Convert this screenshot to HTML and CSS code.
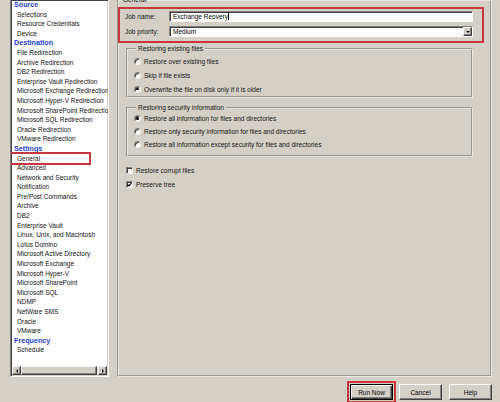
FILE: index.html
```html
<!DOCTYPE html>
<html>
<head>
<meta charset="utf-8">
<link rel="stylesheet" href="styles.css">
</head>
<body>
<div class="window">
  <div class="main">
    <div class="listbox">
      <div class="items">
        <div class="head">Source</div>
        <div class="item">Selections</div>
        <div class="item">Resource Credentials</div>
        <div class="item">Device</div>
        <div class="head">Destination</div>
        <div class="item">File Redirection</div>
        <div class="item">Archive Redirection</div>
        <div class="item">DB2 Redirection</div>
        <div class="item">Enterprise Vault Redirection</div>
        <div class="item">Microsoft Exchange Redirection</div>
        <div class="item">Microsoft Hyper-V Redirection</div>
        <div class="item">Microsoft SharePoint Redirection</div>
        <div class="item">Microsoft SQL Redirection</div>
        <div class="item">Oracle Redirection</div>
        <div class="item">VMware Redirection</div>
        <div class="head">Settings</div>
        <div class="item sel">General</div>
        <div class="item">Advanced</div>
        <div class="item">Network and Security</div>
        <div class="item">Notification</div>
        <div class="item">Pre/Post Commands</div>
        <div class="item">Archive</div>
        <div class="item">DB2</div>
        <div class="item">Enterprise Vault</div>
        <div class="item">Linux, Unix, and Macintosh</div>
        <div class="item">Lotus Domino</div>
        <div class="item">Microsoft Active Directory</div>
        <div class="item">Microsoft Exchange</div>
        <div class="item">Microsoft Hyper-V</div>
        <div class="item">Microsoft SharePoint</div>
        <div class="item">Microsoft SQL</div>
        <div class="item">NDMP</div>
        <div class="item">NetWare SMS</div>
        <div class="item">Oracle</div>
        <div class="item">VMware</div>
        <div class="head">Frequency</div>
        <div class="item">Schedule</div>
      </div>
      <div class="hscroll">
        <span class="sbtn"><span class="tri-l"></span></span>
        <span class="track"><span class="thumb"></span></span>
        <span class="sbtn"><span class="tri-r"></span></span>
      </div>
    </div>

    <fieldset class="frame">
      <legend>General</legend>
      <div class="redbox">
        <div class="field">
          <span class="flabel">Job name:</span>
          <span class="input"><span class="val">Exchange Reovery</span><span class="caret"></span></span>
        </div>
        <div class="field">
          <span class="flabel">Job priority:</span>
          <span class="input select"><span class="val grow">Medium</span><span class="dropbtn"><span class="tri-d"></span></span></span>
        </div>
      </div>

      <fieldset class="group g1">
        <legend>Restoring existing files</legend>
        <div class="opt"><span class="radio"></span><span>Restore over existing files</span></div>
        <div class="opt"><span class="radio"></span><span>Skip if file exists</span></div>
        <div class="opt"><span class="radio on"><span class="dot"></span></span><span>Overwrite the file on disk only if it is older</span></div>
      </fieldset>

      <fieldset class="group g2">
        <legend>Restoring security information</legend>
        <div class="opt"><span class="radio on"><span class="dot"></span></span><span>Restore all information for files and directories</span></div>
        <div class="opt"><span class="radio"></span><span>Restore only security information for files and directories</span></div>
        <div class="opt"><span class="radio"></span><span>Restore all information except security for files and directories</span></div>
      </fieldset>

      <div class="checks">
        <div class="opt"><span class="check"></span><span>Restore corrupt files</span></div>
        <div class="opt"><span class="check"><svg width="5" height="5" viewBox="0 0 5 5"><path d="M0.6 2.3 L2 3.8 L4.5 0.8" fill="none" stroke="#000" stroke-width="1.1"/></svg></span><span>Preserve tree</span></div>
      </div>
    </fieldset>
  </div>

  <div class="buttons">
    <div class="redwrap"><div class="btn default">Run Now</div></div>
    <div class="btn cancel">Cancel</div>
    <div class="btn help">Help</div>
  </div>
</div>
</body>
</html>
```
FILE: styles.css
```css
* { box-sizing: border-box; }
html, body { margin: 0; padding: 0; }
body {
  width: 500px;
  height: 402px;
  overflow: hidden;
  background: #d4d0c8;
  font-family: "Liberation Sans", Arial, sans-serif;
  font-size: 6.5px;
  color: #111;
}
.window { display: flex; flex-direction: column; height: 402px; }
.main { display: flex; height: 377px; flex: none; }

/* left list */
.listbox {
  margin: -1px 0 0 10px;
  width: 99px;
  height: 378px;
  background: #fff;
  border: 1px solid;
  border-color: #808080 #fff #fff #808080;
  box-shadow: inset 1px 1px 0 #404040, inset -1px -1px 0 #d4d0c8;
  display: flex;
  flex-direction: column;
  flex: none;
}
.items { flex: 1; overflow: hidden; white-space: nowrap; }
.head {
  padding-left: 3px;
  line-height: 9.6px;
  height: 9.6px;
  font-size: 7.2px;
  font-weight: bold;
  color: #1e3fd0;
}
.item { padding-left: 6px; line-height: 9.6px; height: 9.6px; }
.item.sel { width: 78px; outline: 2px solid #c6363c; }

.hscroll { flex: none; height: 9px; margin: 0 1px 1px 1px; display: flex; }
.sbtn {
  width: 9px; height: 9px; flex: none;
  background: #d4d0c8;
  border: 1px solid;
  border-color: #f4f2ee #404040 #404040 #f4f2ee;
  box-shadow: inset -1px -1px 0 #808080;
  display: flex; align-items: center; justify-content: center;
}
.tri-l { width: 0; height: 0; border-top: 2.5px solid transparent; border-bottom: 2.5px solid transparent; border-right: 2.5px solid #000; }
.tri-r { width: 0; height: 0; border-top: 2.5px solid transparent; border-bottom: 2.5px solid transparent; border-left: 2.5px solid #000; }
.track { flex: 1; background: #eeece8; display: flex; }
.thumb {
  flex: 1;
  margin-right: 1px;
  background: #d4d0c8;
  border: 1px solid;
  border-color: #f4f2ee #404040 #404040 #f4f2ee;
  box-shadow: inset -1px -1px 0 #808080;
}

/* main frame */
.frame {
  margin: -4px 0 0 8px;
  width: 375px;
  height: 381px;
  border: 2px groove #ebe8e3;
  padding: 0;
  min-width: 0;
  flex: none;
}
.frame > legend, .group > legend {
  margin-left: 2px;
  padding: 0 2px;
  font-size: 6.5px;
  line-height: 8px;
}

.redbox {
  margin: 3px 6px 0 -1px;
  border: 2px solid #c6363c;
  padding: 2px 9px 4px 5px;
  display: flex;
  flex-direction: column;
  gap: 4px;
}
.field { display: flex; align-items: center; height: 11px; }
.flabel { width: 44px; flex: none; }
.input {
  flex: 1;
  height: 11px;
  background: #fff;
  border: 1px solid;
  border-color: #808080 #fff #fff #808080;
  box-shadow: inset 1px 1px 0 #404040;
  display: flex;
  align-items: center;
  padding-left: 3px;
  color: #000;
}
.caret { width: 1px; height: 7px; background: #000; margin-left: 0.5px; }
.grow { flex: 1; }
.dropbtn {
  width: 9px; height: 9px; flex: none;
  background: #d4d0c8;
  border: 1px solid;
  border-color: #f4f2ee #404040 #404040 #f4f2ee;
  box-shadow: inset -1px -1px 0 #808080;
  display: flex; align-items: center; justify-content: center;
}
.tri-d { width: 0; height: 0; border-left: 2.5px solid transparent; border-right: 2.5px solid transparent; border-top: 2.5px solid #000; }

.group {
  margin: 2px 17px 0 7px;
  border: 2px groove #ebe8e3;
  padding: 1px 0 0 6px;
  min-width: 0;
}
.g1 .opt { height: 14px; }
.g2 { margin-top: 6px; padding: 0 0 4px 6px; }
.g2 .opt { height: 13px; }

.opt { display: flex; align-items: center; gap: 3px; white-space: nowrap; }
.radio {
  width: 7px; height: 7px; flex: none;
  border-radius: 50%;
  background: #fff;
  border: 1px solid;
  border-color: #808080 #f4f2ee #f4f2ee #808080;
  box-shadow: inset 1px 1px 0 #404040;
  display: flex; align-items: center; justify-content: center;
}
.dot { width: 2.5px; height: 2.5px; border-radius: 50%; background: #000; }

.checks { margin: 6px 0 0 7px; }
.checks .opt { height: 14px; }
.check {
  width: 7px; height: 7px; flex: none;
  background: #fff;
  border: 1px solid;
  border-color: #808080 #f4f2ee #f4f2ee #808080;
  box-shadow: inset 1px 1px 0 #404040;
  display: flex; align-items: center; justify-content: center;
}
.check svg { display: block; }

/* buttons */
.buttons {
  flex: none;
  display: flex;
  justify-content: flex-end;
  align-items: center;
  height: 22px;
  margin-top: 4px;
  padding-right: 8px;
}
.redwrap { border: 2px solid #c6363c; padding: 1px; margin-right: 3px; }
.btn {
  width: 43px; height: 16px;
  background: #d4d0c8;
  border: 1px solid;
  border-color: #fff #404040 #404040 #fff;
  box-shadow: inset -1px -1px 0 #808080;
  display: flex; align-items: center; justify-content: center;
  color: #000;
}
.btn.default {
  border: 1px solid #000;
  box-shadow: inset 1px 1px 0 #fff, inset -1px -1px 0 #404040, inset -2px -2px 0 #808080;
}
.btn.cancel { margin-right: 7px; }
```
